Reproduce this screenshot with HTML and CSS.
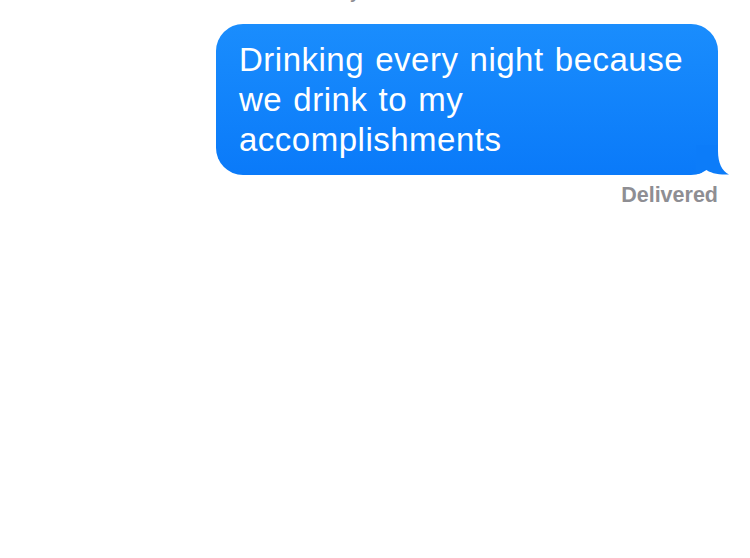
FILE: index.html
```html
<!DOCTYPE html>
<html lang="en">
<head>
    <meta charset="UTF-8">
    <meta name="viewport" content="width=device-width, initial-scale=1.0">
    <title>Messages</title>
    <link rel="stylesheet" href="styles.css">
</head>
<body>
    <div class="thread">
        <div class="timestamp"><b>Today</b> 9:41 PM</div>

        <div class="row sent">
            <div class="bubble">
                Drinking every night because we drink to my accomplishments
                <svg class="tail" width="34" height="30" viewBox="0 0 34 30">
                    <path d="M0 29 C4 29 7 27 9 24 C14 28 22 30 33 29.5 C26 26 22 18 22 6 L22 0 L0 0 Z" fill="#0c7cf9"/>
                </svg>
            </div>
        </div>
        <div class="status">Delivered</div>
    </div>
</body>
</html>
```

FILE: styles.css
```css
body {
    margin: 0;
    background: #fff;
    font-family: "Liberation Sans", Arial, sans-serif;
}

.thread {
    padding: 0 32px 0 0;
}

.timestamp {
    margin-top: -16px;
    height: 22px;
    text-align: center;
    color: #8e8e93;
    font-size: 17px;
    padding-left: 20px;
}

.timestamp b {
    font-weight: 700;
}

.row {
    display: flex;
    margin-top: 18px;
}

.sent {
    justify-content: flex-end;
}

.bubble {
    position: relative;
    width: 502px;
    box-sizing: border-box;
    padding: 16px 20px 15px 23px;
    border-radius: 27px;
    background: linear-gradient(#1a8dfd, #0a7af9);
    color: #fff;
    font-size: 33px;
    line-height: 40px;
    letter-spacing: 0.5px;
    word-spacing: 1.5px;
}

.tail {
    position: absolute;
    right: -12px;
    bottom: 0;
}

.status {
    text-align: right;
    margin-top: 8px;
    color: #8e8e93;
    font-size: 21.5px;
    font-weight: 700;
}
```
